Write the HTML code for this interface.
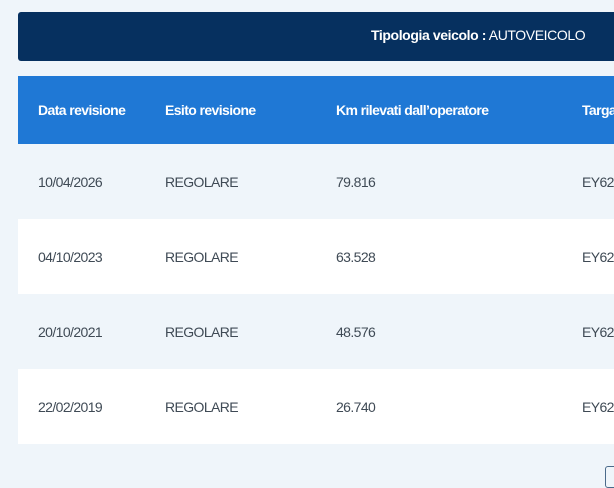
<!DOCTYPE html>
<html><head><style>
body{margin:0;width:614px;height:480px;background:#eff5fa;font-family:"Liberation Sans",sans-serif;overflow:hidden;position:relative}
.bar{position:absolute;left:18px;top:12px;width:620px;height:49px;background:#06305f;border-radius:3px}
.bar span{position:absolute;left:353px;top:15px;color:#fff;font-size:14px;white-space:nowrap;letter-spacing:-0.4px}
.hd{position:absolute;left:18px;top:76px;width:620px;height:68px;background:#1f78d5}
.row{position:absolute;left:18px;width:620px;height:75px}
.c{position:absolute;white-space:nowrap;font-size:14px;letter-spacing:-0.6px}
.hd .c{color:#fff;font-weight:bold;top:26px}
.row .c{color:#3f4a55;top:30px}
.box{position:absolute;left:605px;top:466px;width:14px;height:20px;border:1.5px solid #4a6a8a;border-radius:3px}
</style></head><body>
<div class="bar"><span><b>Tipologia veicolo :</b> AUTOVEICOLO</span></div>
<div class="hd"><span class="c" style="left:20px">Data revisione</span><span class="c" style="left:147px">Esito revisione</span><span class="c" style="left:318px">Km rilevati dall’operatore</span><span class="c" style="left:564px">Targa</span></div>
<div class="row" style="top:144px;background:#eff5fa"><span class="c" style="left:20px">10/04/2026</span><span class="c" style="left:147px">REGOLARE</span><span class="c" style="left:318px">79.816</span><span class="c" style="left:564px">EY62</span></div>
<div class="row" style="top:219px;background:#fff"><span class="c" style="left:20px">04/10/2023</span><span class="c" style="left:147px">REGOLARE</span><span class="c" style="left:318px">63.528</span><span class="c" style="left:564px">EY62</span></div>
<div class="row" style="top:294px;background:#eff5fa"><span class="c" style="left:20px">20/10/2021</span><span class="c" style="left:147px">REGOLARE</span><span class="c" style="left:318px">48.576</span><span class="c" style="left:564px">EY62</span></div>
<div class="row" style="top:369px;background:#fff"><span class="c" style="left:20px">22/02/2019</span><span class="c" style="left:147px">REGOLARE</span><span class="c" style="left:318px">26.740</span><span class="c" style="left:564px">EY62</span></div>
<div class="box"></div>
</body></html>
